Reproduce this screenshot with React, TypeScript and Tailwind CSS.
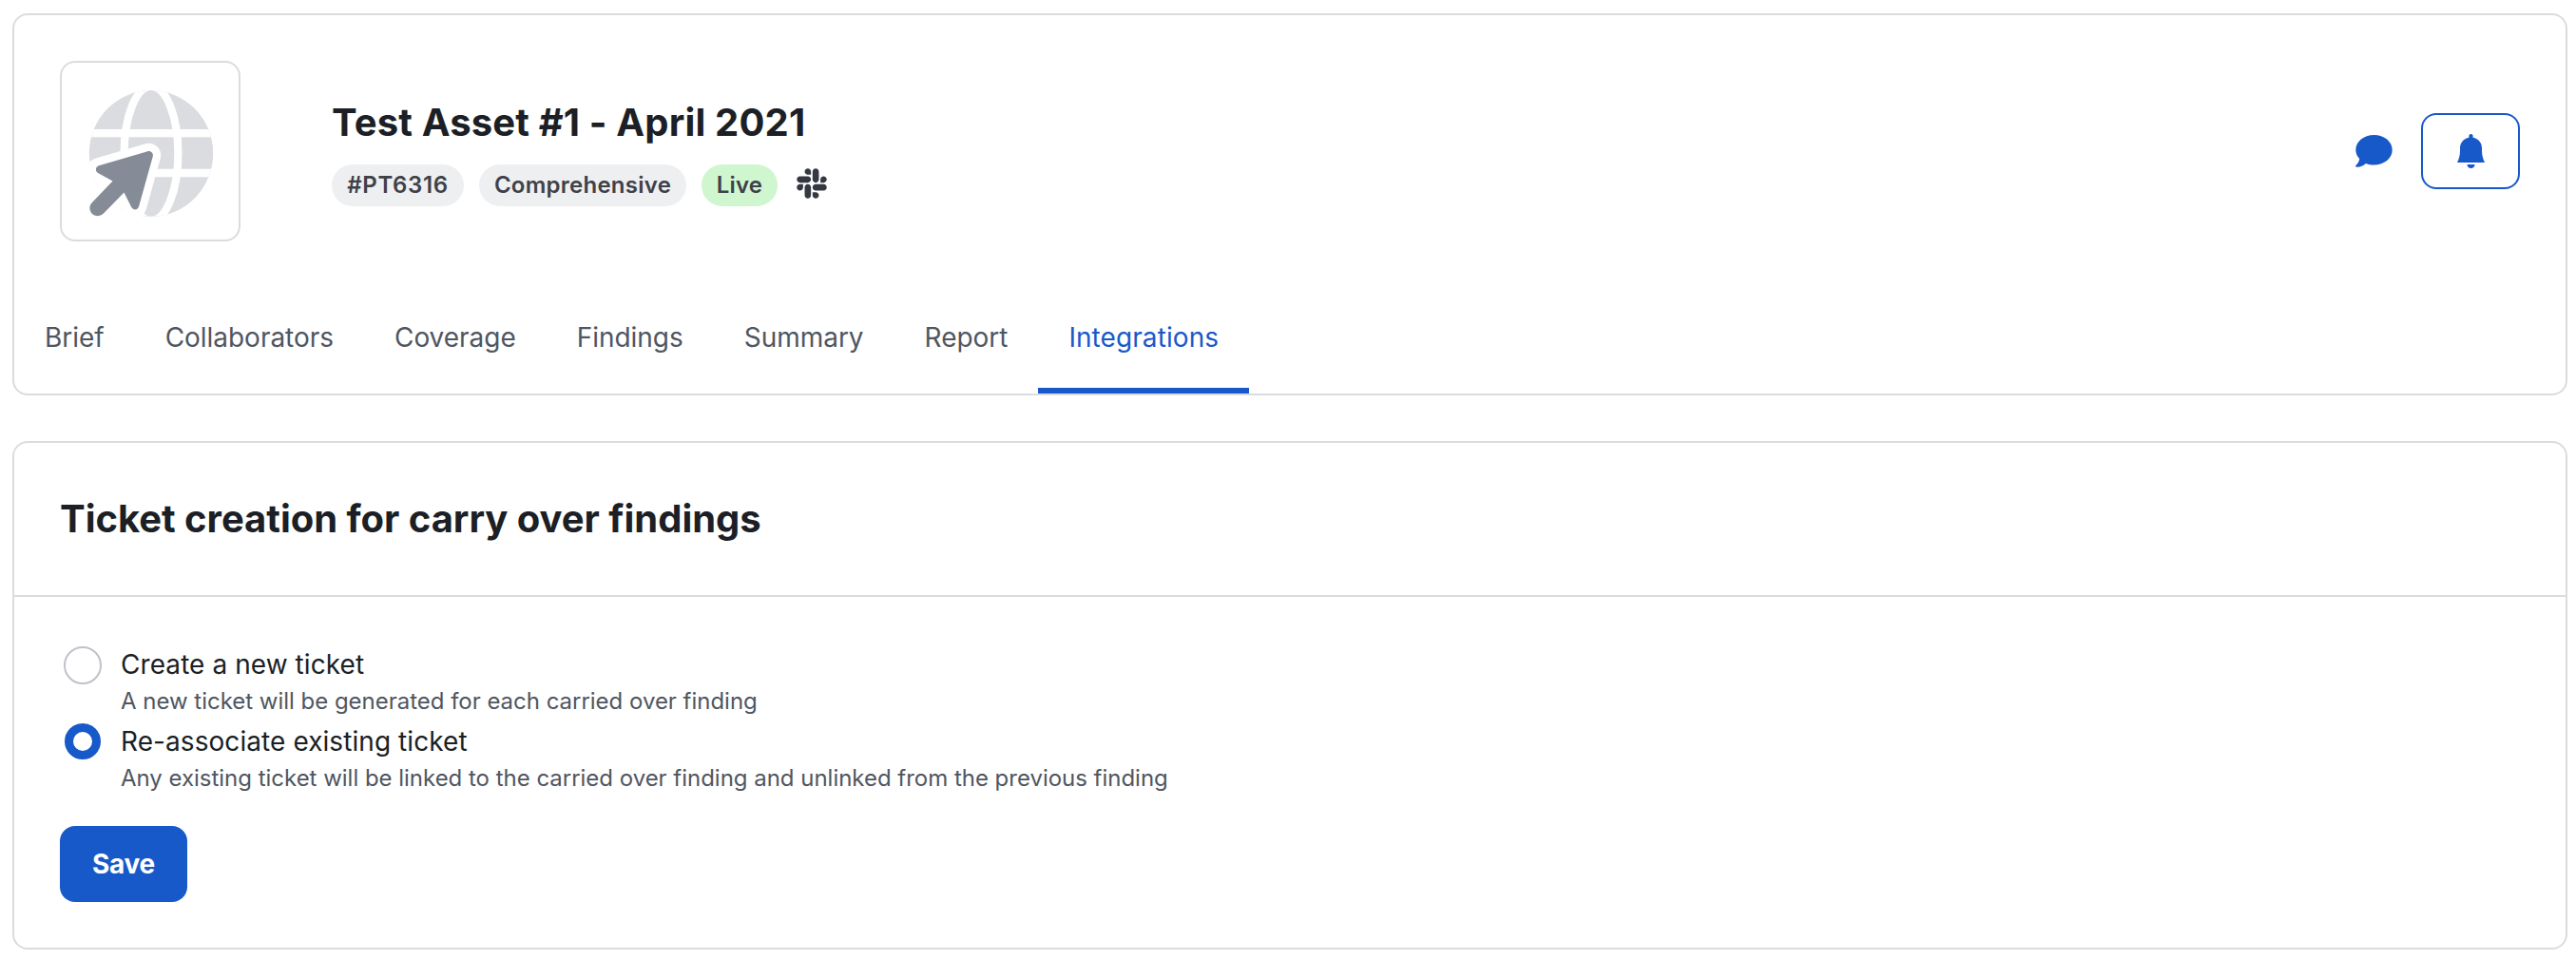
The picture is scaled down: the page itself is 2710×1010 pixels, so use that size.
import type { ReactNode } from "react";
import { FaSlack } from "react-icons/fa";

const tabs = ["Brief", "Collaborators", "Coverage", "Findings", "Summary", "Report", "Integrations"];

const options = [
  {
    label: "Create a new ticket",
    hint: "A new ticket will be generated for each carried over finding",
    checked: false,
  },
  {
    label: "Re-associate existing ticket",
    hint: "Any existing ticket will be linked to the carried over finding and unlinked from the previous finding",
    checked: true,
  },
];

const arrow =
  "M89.500 93.400L39 108.200C35 109.500 35 114.500 38.500 116.200L53.500 124.600L31.500 147.500C25 155 35 166.500 44 158.500L65.500 136.500L73 151.500C75 155.500 79.500 155.500 81 151.500L95.800 98.500C96.700 95 93.500 92 89.500 93.400Z";

function GlobeCursor() {
  return (
    <svg viewBox="0 0 186 186" className="size-full">
      <clipPath id="globe">
        <ellipse cx="94" cy="95.400" rx="65.200" ry="66.300" />
      </clipPath>
      <g clipPath="url(#globe)">
        <rect width="186" height="186" fill="#dbdce0" />
        <ellipse cx="94" cy="95.400" rx="28.400" ry="70.400" fill="#dbdce0" stroke="#fff" strokeWidth="8.200" />
        <path d="M20 74.200H170M20 116H170" stroke="#fff" strokeWidth="8.300" />
        <path d="M20 107.500L28.700 103.800L62 93.500L60 120L74 154L84 175H20Z" fill="#fff" />
      </g>
      <path d={arrow} fill="#fff" stroke="#fff" strokeWidth="16.500" strokeLinejoin="round" />
      <path d={arrow} fill="#858c97" />
    </svg>
  );
}

function ChatIcon() {
  return (
    <svg viewBox="0 0 39 34" className="h-[34px] w-[39px] fill-[#1859c9]">
      <path d="M19.500 0C30.300 0 38.700 7 38.700 15.800S30.300 31.500 19.500 31.500C16.500 31.500 13.500 31 11 30C8 32.500 3.500 34.500 .5 33.500C-.3 33.200-.1 32.600.5 32C2.500 30 4 27.500 4.200 25C1.700 22.500.3 19.300.3 15.800C.3 7 8.700 0 19.500 0Z" />
    </svg>
  );
}

function BellIcon() {
  return (
    <svg viewBox="0 0 29 36" className="h-9 w-[29px] fill-[#1859c9]">
      <path d="M14.500 0C16 0 16.600 1 16.600 2.200V3.800C22.500 5 26 9.500 26 15V18C26 22 27 26 29 30H0C2 26 3 22 3 18V15C3 9.500 6.500 5 12.400 3.800V2.200C12.400 1 13 0 14.500 0Z" />
      <path d="M10.500 32H18.500C18.500 34.500 16.700 36 14.500 36S10.500 34.500 10.500 32Z" />
    </svg>
  );
}

function Pill({ className, children }: { className: string; children: ReactNode }) {
  return (
    <span className={`flex h-11 items-center justify-center rounded-full text-2xl font-semibold text-[#3f4149] ${className}`}>
      {children}
    </span>
  );
}

export default function App() {
  return (
    <main className="flex h-[1010px] w-[2710px] flex-col gap-12 bg-white pt-3.5 pr-[9px] pl-[13px] font-['Inter',sans-serif] text-[#1c1f25]">
      <header className="flex h-[402px] flex-col justify-between rounded-2xl border-2 border-[#dbdce0]">
        <div className="flex items-center p-12">
          <div className="size-[190px] shrink-0 rounded-2xl border-2 border-[#dbdce0]">
            <GlobeCursor />
          </div>
          <div className="ml-24 flex flex-col gap-4">
            <h1 className="text-[40px] leading-[56px] font-bold tracking-[0.15px]">Test Asset #1 - April 2021</h1>
            <div className="flex items-center gap-4">
              <Pill className="w-[139px] bg-[#eeeff1] tracking-[0.65px]">#PT6316</Pill>
              <Pill className="w-[218px] bg-[#eeeff1] tracking-[0.25px]">Comprehensive</Pill>
              <Pill className="w-20 bg-[#cff6cf] tracking-[0.15px]">Live</Pill>
              <FaSlack className="mb-1 ml-0.5 size-9 text-[#343841]" />
            </div>
          </div>
          <div className="ml-auto flex items-center gap-[30px]">
            <ChatIcon />
            <button className="flex h-20 w-[104px] items-center justify-center rounded-2xl border-2 border-[#1859c9]">
              <BellIcon />
            </button>
          </div>
        </div>
        <nav className="flex text-[28px] leading-10 text-[#505660]">
          {tabs.map((tab) => (
            <a
              key={tab}
              className={
                tab === "Integrations"
                  ? "flex h-[84px] flex-col border-b-[6px] border-[#1859c9] px-8 pt-[5px] tracking-[0.08px] text-[#1859c9]"
                  : "flex h-[84px] flex-col px-8 pt-[5px] tracking-[-0.03px]"
              }
            >
              {tab}
            </a>
          ))}
        </nav>
      </header>

      <section className="flex h-[535px] flex-col rounded-2xl border-2 border-[#dbdce0]">
        <div className="flex h-[162px] shrink-0 items-center border-b-2 border-[#dbdce0] px-12">
          <h2 className="text-[40px] leading-[56px] font-bold tracking-[-0.03px]">Ticket creation for carry over findings</h2>
        </div>
        <div className="flex flex-col items-start px-12 pt-[52px]">
          {options.map((option) => (
            <label key={option.label} className="flex h-[81px] gap-5 pl-1">
              {option.checked ? (
                <span className="mx-px size-[38px] rounded-full border-[9px] border-[#1859c9]" />
              ) : (
                <span className="size-10 rounded-full border-2 border-[#bfc2c9]" />
              )}
              <span className="flex flex-col">
                <span className="-mt-px text-[28px] leading-10 tracking-[0.07px]">{option.label}</span>
                <span className="mt-px text-2xl leading-9 tracking-[-0.02px] text-[#505660]">{option.hint}</span>
              </span>
            </label>
          ))}
          <button className="mt-[27px] flex h-20 w-[134px] items-center justify-center rounded-2xl bg-[#1859c9] text-[28px] font-bold tracking-[-0.3px] text-white">
            Save
          </button>
        </div>
      </section>
    </main>
  );
}
